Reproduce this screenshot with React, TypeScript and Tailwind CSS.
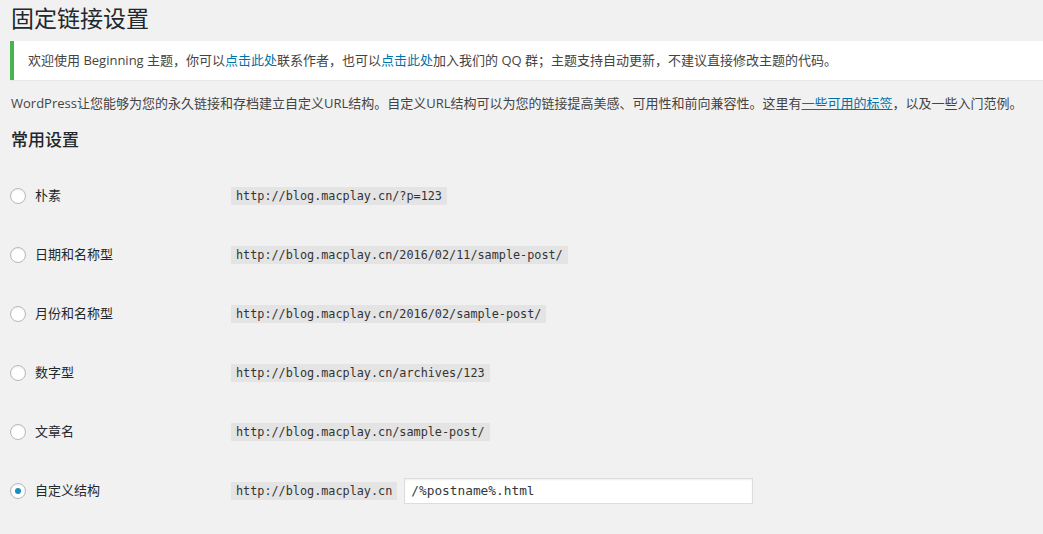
// Permalink settings screen (WordPress admin style)

const sans = 'font-["Open_Sans","Noto_Sans_CJK_SC",sans-serif]';
const mono = 'font-["DejaVu_Sans_Mono","Liberation_Mono",monospace]';

interface Choice {
  label: string;
  sample: string;
  checked?: boolean;
  custom?: string;
}

const choices: Choice[] = [
  { label: '朴素', sample: 'http://blog.macplay.cn/?p=123' },
  { label: '日期和名称型', sample: 'http://blog.macplay.cn/2016/02/11/sample-post/' },
  { label: '月份和名称型', sample: 'http://blog.macplay.cn/2016/02/sample-post/' },
  { label: '数字型', sample: 'http://blog.macplay.cn/archives/123' },
  { label: '文章名', sample: 'http://blog.macplay.cn/sample-post/' },
  { label: '自定义结构', sample: 'http://blog.macplay.cn', checked: true, custom: '/%postname%.html' },
];

/** Radio circle, drawn with CSS. */
function Radio({ checked }: { checked?: boolean }) {
  return (
    <span className="flex h-4 w-4 shrink-0 items-center justify-center rounded-full border border-[#b4b9be] bg-white shadow-[inset_0_1px_2px_rgba(0,0,0,0.07)]">
      {checked && <span className="h-[6px] w-[6px] rounded-full bg-[#1e8cbe]" />}
    </span>
  );
}

export default function App() {
  return (
    <div className={`${sans} min-h-[534px] w-[1043px] overflow-hidden bg-[#f1f1f1] text-[13px] text-[#444]`}>
      <h1 className="pl-[11px] pt-[4px] text-[23px] leading-[29px] font-normal text-[#23282d]">固定链接设置</h1>

      <div className="ml-[10px] mt-[8px] flex h-[39px] items-center border-l-4 border-[#46b450] bg-white pl-[14px] shadow-[0_1px_1px_rgba(0,0,0,0.04)]">
        <p className="text-[#444]">
          欢迎使用 Beginning 主题，你可以<a className="text-[#0073aa]">点击此处</a>联系作者，也可以
          <a className="text-[#0073aa]">点击此处</a>加入我们的 QQ 群；主题支持自动更新，不建议直接修改主题的代码。
        </p>
      </div>

      <p className="mt-[14px] whitespace-nowrap pl-[11px] leading-[18px]">
        WordPress让您能够为您的永久链接和存档建立自定义URL结构。自定义URL结构可以为您的链接提高美感、可用性和前向兼容性。这里有
        <a className="text-[#0073aa] underline">一些可用的标签</a>，以及一些入门范例。
      </p>

      <h2 className="mt-[17px] pl-[11px] text-[17px] leading-[22px] font-medium text-[#23282d]">常用设置</h2>

      <div className="mt-[15px] flex flex-col pl-[10px]">
        {choices.map((c) => (
          <div key={c.label} className="flex h-[59px] items-center">
            <div className="flex w-[221px] items-center gap-[9px]">
              <Radio checked={c.checked} />
              <span className="text-[#23282d]">{c.label}</span>
            </div>
            <code className={`${mono} bg-[#e4e4e4] px-[5px] py-[1px] text-[11.8px] leading-[16px] text-[#333]`}>
              {c.sample}
            </code>
            {c.custom && (
              <div
                className={`${mono} ml-[7px] flex h-[26px] w-[349px] items-center border border-[#ddd] bg-white px-[6px] text-[12.8px] text-[#32373c] shadow-[inset_0_1px_2px_rgba(0,0,0,0.07)]`}
              >
                {c.custom}
              </div>
            )}
          </div>
        ))}
      </div>
    </div>
  );
}
